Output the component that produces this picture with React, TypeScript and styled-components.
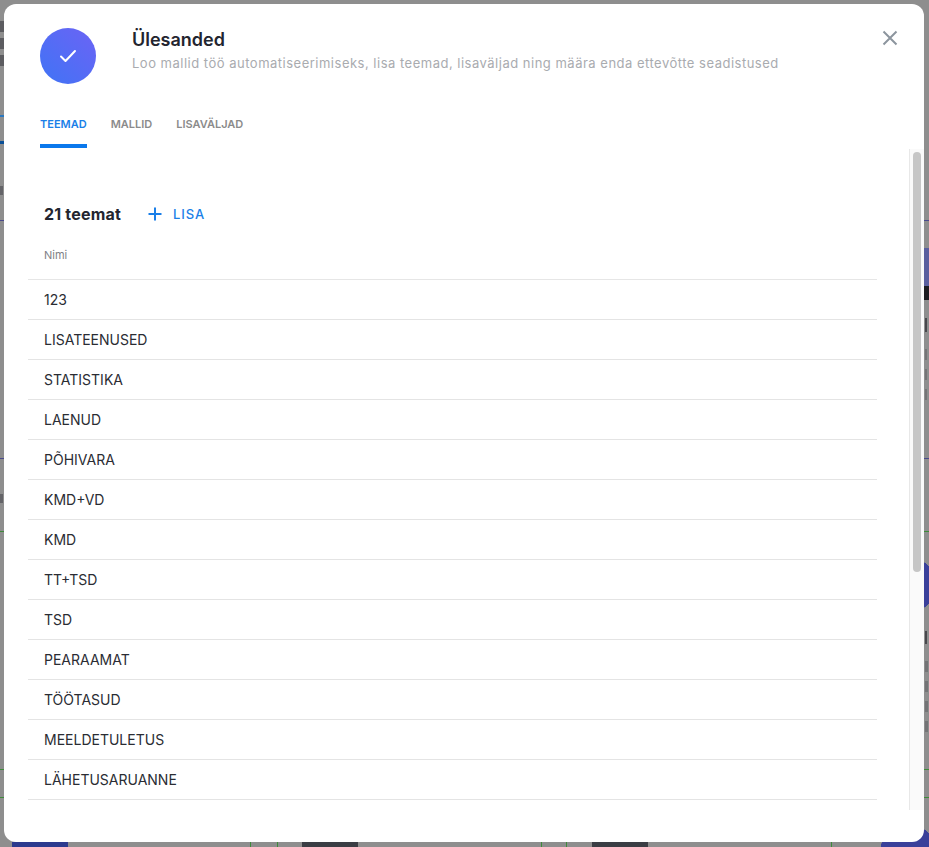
import styled, { createGlobalStyle } from 'styled-components'

const GlobalStyle = createGlobalStyle`
    html, body {
        margin: 0;
        height: 100%;
        overflow: hidden;
        font-family: Inter, "Liberation Sans", sans-serif;
    }
`

const solid = (color: string, x: number, y: number, w: number, h: number) =>
    `linear-gradient(${color}, ${color}) ${x}px ${y}px / ${w}px ${h}px no-repeat`

const disc = (x: number, y: number) =>
    `radial-gradient(circle 28px at ${x}px ${y}px, #3a409a 99%, transparent 100%)`

// the dimmed page behind the modal, only its edges show
const pageBits = [
    // left edge
    solid('#5c5c60', 0, 21, 4, 11),
    solid('#5c5c60', 0, 38, 4, 11),
    solid('#5c5c60', 0, 55, 4, 11),
    solid('#2a78c0', 0, 115, 4, 2),
    solid('#0a4f96', 0, 141, 4, 3),
    solid('#646468', 0, 186, 3, 9),
    solid('#646468', 0, 494, 3, 9),
    // right edge
    solid('#5a5f9e', 924, 248, 5, 38),
    solid('#1c1c20', 924, 286, 5, 14),
    solid('#48484c', 925, 318, 2, 14),
    solid('#747476', 925, 349, 2, 11),
    solid('#747476', 925, 369, 2, 11),
    solid('#747476', 925, 389, 2, 11),
    solid('#48484c', 925, 631, 2, 13),
    solid('#747476', 925, 661, 3, 11),
    solid('#747476', 925, 681, 3, 11),
    solid('#747476', 925, 701, 3, 11),
    solid('#747476', 925, 721, 3, 11),
    // bottom edge
    solid('#2c3a8e', 12, 842, 56, 5),
    solid('#3f8a3a', 250, 842, 1, 5),
    solid('#3f8a3a', 277, 842, 1, 5),
    solid('#3a3d44', 302, 842, 56, 5),
    solid('#3f8a3a', 541, 842, 1, 5),
    solid('#3f8a3a', 566, 842, 1, 5),
    solid('#3a3d44', 592, 842, 56, 5),
    solid('#3f8a3a', 831, 842, 1, 5),
    // section rules
    solid('#4a4a8c', 0, 220, 929, 1),
    solid('#4a4a8c', 0, 458, 929, 1),
    solid('#3f8a3a', 0, 531, 929, 1),
    solid('#3f8a3a', 0, 769, 929, 1),
    solid('#3f8a3a', 0, 797, 929, 1),
    disc(908, 585),
    disc(908, 852),
].join(', ')

const Backdrop = styled.div`
    width: 929px;
    height: 847px;
    box-sizing: border-box;
    padding: 4px 5px 5px 4px;
    overflow: hidden;
    background: ${pageBits}, #8e8e8e;
`

const Modal = styled.div`
    position: relative;
    height: 100%;
    background: #fff;
    border-radius: 12px;
    overflow: hidden;
    display: flex;
    flex-direction: column;
`

const Header = styled.header`
    display: flex;
    align-items: flex-start;
    padding: 24px 36px 0;
`

const Badge = styled.div`
    width: 56px;
    height: 56px;
    border-radius: 50%;
    flex-shrink: 0;
    display: flex;
    align-items: center;
    justify-content: center;
    background: linear-gradient(45deg, #3f74f5, #6c63f5);
`

const HeaderText = styled.div`
    margin-left: 36px;
    padding-top: 1px;
`

const Title = styled.h1`
    margin: 0;
    font-size: 18px;
    line-height: 22px;
    font-weight: 600;
    color: #23252f;
`

const Subtitle = styled.p`
    margin: 3px 0 0;
    font-size: 13px;
    line-height: 18px;
    letter-spacing: 0.5px;
    color: #a9abaf;
`

const CloseButton = styled.button`
    position: absolute;
    top: 24px;
    right: 24px;
    width: 20px;
    height: 20px;
    padding: 0;
    border: 0;
    background: none;
    color: #8c959e;
`

const Tabs = styled.nav`
    display: flex;
    gap: 24px;
    margin: 24px 36px 0;
`

const Tab = styled.div<{ $active?: boolean }>`
    height: 40px;
    box-sizing: border-box;
    padding-top: 9px;
    font-size: 11px;
    line-height: 15px;
    font-weight: 600;
    color: ${props => (props.$active ? '#1a7fe8' : '#8b8b8b')};
    border-bottom: 4px solid ${props => (props.$active ? '#0a78ec' : 'transparent')};
`

const Body = styled.div`
    flex: 1;
    min-height: 0;
    padding: 0 47px 0 24px;
`

const Toolbar = styled.div`
    display: flex;
    align-items: center;
    height: 24px;
    margin-top: 54px;
    padding-left: 16px;
`

const Count = styled.span`
    font-size: 16px;
    font-weight: 700;
    letter-spacing: 0.2px;
    color: #23252f;
`

const AddButton = styled.button`
    display: flex;
    align-items: center;
    gap: 10px;
    margin-left: 26px;
    padding: 0;
    border: 0;
    background: none;
    font-family: inherit;
    font-size: 13px;
    font-weight: 500;
    letter-spacing: 0.9px;
    color: #1a7fe8;
`

const ColumnHead = styled.div`
    height: 54px;
    box-sizing: border-box;
    padding: 22px 0 0 16px;
    font-size: 11px;
    line-height: 14px;
    color: #7f8186;
    border-bottom: 1px solid #e6e6e6;
`

const Row = styled.div`
    height: 40px;
    box-sizing: border-box;
    padding-left: 16px;
    font-size: 14px;
    line-height: 39px;
    color: #2a2c33;
    border-bottom: 1px solid #e4e4e4;
`

const ScrollTrack = styled.div`
    position: absolute;
    top: 145px;
    right: 0;
    bottom: 32px;
    width: 15px;
    box-sizing: border-box;
    padding: 3px 2px 0 3px;
    background: #fafafa;
    border-left: 1px solid #e8e8e8;
`

const ScrollThumb = styled.div`
    width: 8px;
    height: 420px;
    border-radius: 4px;
    background: #c6c6c6;
`

const themes = [
    '123',
    'LISATEENUSED',
    'STATISTIKA',
    'LAENUD',
    'PÕHIVARA',
    'KMD+VD',
    'KMD',
    'TT+TSD',
    'TSD',
    'PEARAAMAT',
    'TÖÖTASUD',
    'MEELDETULETUS',
    'LÄHETUSARUANNE',
]

export default function App() {
    return (
        <Backdrop>
            <GlobalStyle />
            <Modal>
                <Header>
                    <Badge>
                        <svg width="18" height="14" viewBox="0 0 18 14" fill="none" stroke="#fff" strokeWidth="2" strokeLinecap="round" strokeLinejoin="round">
                            <path d="M2 7.5l4.5 4.5L16 2" />
                        </svg>
                    </Badge>
                    <HeaderText>
                        <Title>Ülesanded</Title>
                        <Subtitle>Loo mallid töö automatiseerimiseks, lisa teemad, lisaväljad ning määra enda ettevõtte seadistused</Subtitle>
                    </HeaderText>
                </Header>
                <CloseButton aria-label="Sulge">
                    <svg width="20" height="20" viewBox="0 0 20 20" fill="none" stroke="currentColor" strokeWidth="2">
                        <path d="M3.5 3.5l13 13M16.5 3.5l-13 13" />
                    </svg>
                </CloseButton>
                <Tabs>
                    <Tab $active>TEEMAD</Tab>
                    <Tab>MALLID</Tab>
                    <Tab>LISAVÄLJAD</Tab>
                </Tabs>
                <Body>
                    <Toolbar>
                        <Count>21 teemat</Count>
                        <AddButton>
                            <svg width="16" height="16" viewBox="0 0 16 16" fill="none" stroke="currentColor" strokeWidth="2">
                                <path d="M8 1.5v13M1.5 8h13" />
                            </svg>
                            LISA
                        </AddButton>
                    </Toolbar>
                    <ColumnHead>Nimi</ColumnHead>
                    {themes.map(name => (
                        <Row key={name}>{name}</Row>
                    ))}
                </Body>
                <ScrollTrack>
                    <ScrollThumb />
                </ScrollTrack>
            </Modal>
        </Backdrop>
    )
}
